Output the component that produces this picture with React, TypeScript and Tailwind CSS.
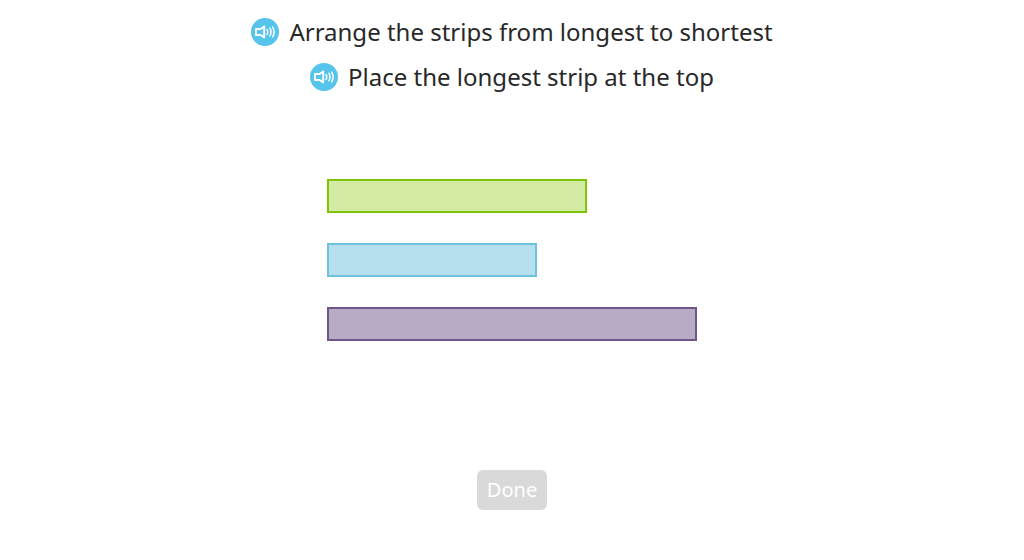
import React from 'react';

interface InstructionProps {
  text: string;
}

interface Strip {
  id: string;
  length: number;
  className: string;
}

const strips: Strip[] = [
  { id: 'green', length: 260, className: 'bg-[#d4eba5] border-[#80c505]' },
  { id: 'blue', length: 210, className: 'bg-[#b7e0ee] border-[#70c1de]' },
  { id: 'purple', length: 370, className: 'bg-[#b8abc5] border-[#70578b]' },
];

const SpeakerIcon: React.FC = () => (
  <svg viewBox="0 0 28 28" className="w-7 h-7" fill="none" aria-hidden="true">
    <circle cx="14" cy="14" r="14" fill="#56c4eb" />
    <path
      d="M5 11H9.6L13.2 8.4V19.6L9.6 17H5Z"
      stroke="white"
      strokeWidth="1.9"
      strokeLinejoin="round"
    />
    <path
      d="M16 11.6Q17.6 14 16 16.4M18.9 10.2Q21.1 14 18.9 17.8M21.7 9.2Q24.5 14 21.7 18.8"
      stroke="white"
      strokeWidth="1.5"
      strokeLinecap="round"
    />
  </svg>
);

const Instruction: React.FC<InstructionProps> = ({ text }) => (
  <div className="flex items-center justify-center gap-[10px]">
    <button type="button" aria-label={`Listen: ${text}`} className="rounded-full shrink-0 cursor-pointer">
      <SpeakerIcon />
    </button>
    <p className="text-2xl leading-[33px] text-[#282828]">{text}</p>
  </div>
);

const App: React.FC = () => {
  return (
    <main className="min-h-screen bg-white flex flex-col items-center font-['Noto_Sans',sans-serif]">
      <header className="pt-[15px] px-4 flex flex-col gap-3">
        <Instruction text="Arrange the strips from longest to shortest" />
        <Instruction text="Place the longest strip at the top" />
      </header>

      <ul className="mt-[86px] max-w-full flex flex-col gap-[30px]">
        {strips.map((strip) => (
          <li
            key={strip.id}
            className={`h-[34px] max-w-full border-2 cursor-grab ${strip.className}`}
            style={{ width: strip.length }}
          />
        ))}
      </ul>

      <button
        type="button"
        disabled
        className="mt-auto mb-[50px] h-10 px-[10px] rounded-md bg-[#d9d9d9] text-white text-xl"
      >
        Done
      </button>
    </main>
  );
};

export default App;
